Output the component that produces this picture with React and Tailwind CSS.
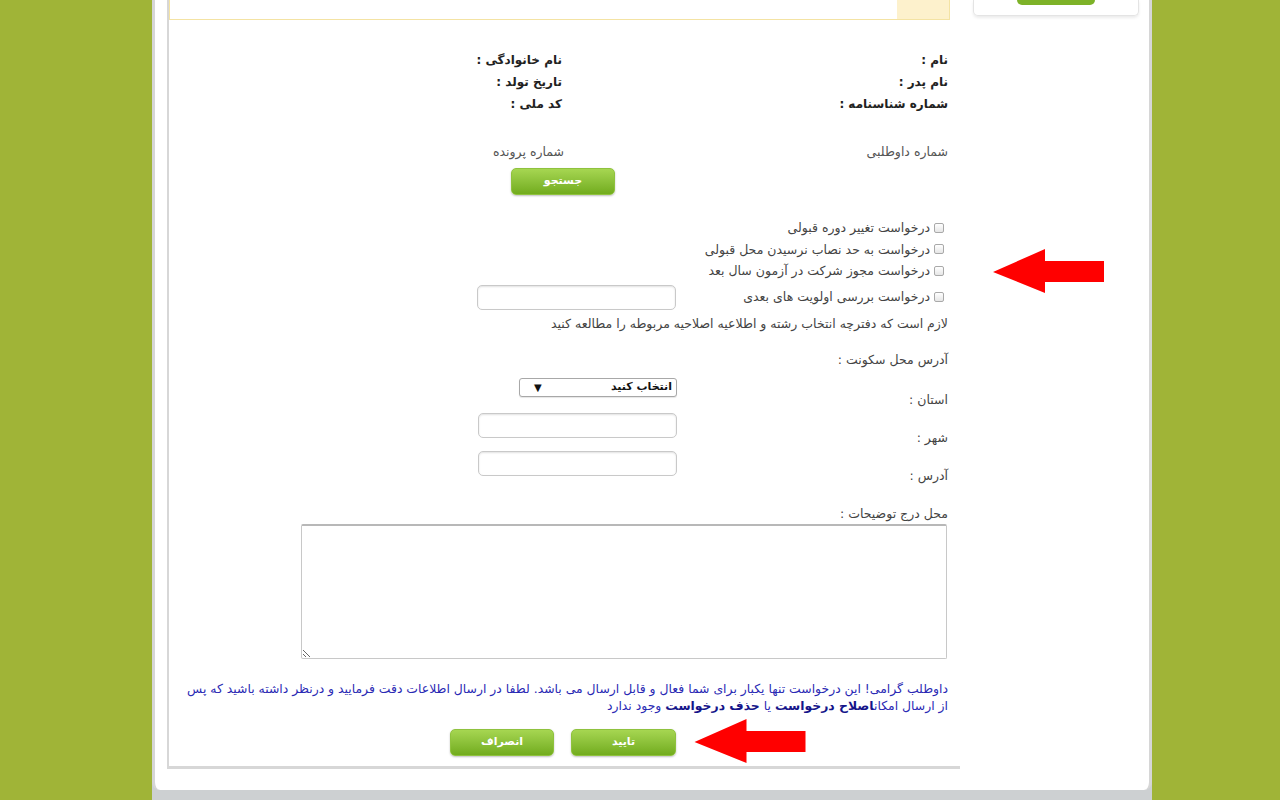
import React from "react";

const font = { fontFamily: '"DejaVu Sans", Tahoma, sans-serif' };

function GreenButton({ children, className = "" }) {
  return (
    <button
      type="button"
      className={`h-[27px] w-[104px] rounded-[5px] border border-[#8fc23e] bg-gradient-to-b from-[#a6d651] to-[#72ac1c] text-[11px] font-bold text-white shadow-[0_1px_2px_rgba(0,0,0,0.25)] ${className}`}
    >
      {children}
    </button>
  );
}

function Box({ className = "" }) {
  return (
    <div
      className={`h-[25px] w-[199px] rounded-[5px] border border-[#c9c9c9] bg-white shadow-[inset_0_1px_2px_rgba(0,0,0,0.12)] ${className}`}
    />
  );
}

function Check({ label }) {
  return (
    <div className="flex items-center gap-[4px] pr-[6px]">
      <span className="h-[10px] w-[10px] rounded-[2px] border border-[#a9a9a9] bg-gradient-to-b from-white to-[#e6e6e6]" />
      <span>{label}</span>
    </div>
  );
}

function Arrow({ className = "" }) {
  return (
    <svg viewBox="0 0 111 45" className={className}>
      <polygon points="0,24 52,1 52,13 111,13 111,34 52,34 52,45" fill="#ff0000" />
    </svg>
  );
}

export default function App() {
  return (
    <div className="relative h-[800px] w-[1280px] overflow-hidden bg-[#a0b437]" style={font}>
      <div className="ml-[152px] h-[800px] w-[1000px] bg-[#cdd0d2]">
        <div
          dir="rtl"
          className="flex h-[790px] rounded-b-[8px] border-x-[3px] border-[#d6d6d6] bg-white text-[12.5px] text-[#333]"
        >
          {/* sidebar */}
          <div className="w-[189px] shrink-0 pr-[10px]">
            <div className="flex h-[16px] w-[166px] justify-center rounded-b-[5px] border border-t-0 border-[#e4e4e4] shadow-[0_2px_3px_rgba(0,0,0,0.08)]">
              <div className="h-[5px] w-[78px] rounded-b-[5px] bg-[#7db228]" />
            </div>
          </div>

          {/* main column */}
          <div className="h-[769px] w-[793px] shrink-0 border-b-[3px] border-l-[2px] border-[#d7d7d7] pr-[10px]">
            <div className="flex h-[20px] border-x border-b border-[#f4e3a3] bg-white">
              <div className="w-[52px] bg-[#fdf1cc]" />
            </div>

            <div className="mt-[29px] grid grid-cols-[386px_1fr] pr-[2px] text-[12px] font-bold leading-[22px] text-[#222]">
              <div>نام :</div>
              <div>نام خانوادگی :</div>
              <div>نام پدر :</div>
              <div>تاریخ تولد :</div>
              <div>شماره شناسنامه :</div>
              <div>کد ملی :</div>
            </div>

            <div className="mt-[28px] grid grid-cols-[384px_1fr] pr-[2px] leading-[18px] text-[#555]">
              <div>شماره داوطلبی</div>
              <div>شماره پرونده</div>
            </div>
            <div className="mt-[7px] flex">
              <GreenButton className="mr-[335px]">جستجو</GreenButton>
            </div>

            <div className="mt-[22px] flex flex-col leading-[21.5px] text-[#444]">
              <Check label="درخواست تغییر دوره قبولی" />
              <Check label="درخواست به حد نصاب نرسیدن محل قبولی" />
              <Check label="درخواست مجوز شرکت در آزمون سال بعد" />
              <div className="flex items-center pt-[3px]">
                <Check label="درخواست بررسی اولویت های بعدی" />
                <Box className="me-[308px] ms-auto" />
              </div>
            </div>
            <div className="mt-[5px] pr-[2px] leading-[18px] text-[#444]">
              لازم است که دفترچه انتخاب رشته و اطلاعیه اصلاحیه مربوطه را مطالعه کنید
            </div>

            <div className="mt-[18px] pr-[2px] leading-[18px] text-[#444]">آدرس محل سکونت :</div>
            <div className="mt-[9px] flex text-[#444]">
              <div className="flex flex-col pr-[2px] pt-[3px] leading-[38px]">
                <div>استان :</div>
                <div>شهر :</div>
                <div>آدرس :</div>
              </div>
              <div className="me-[308px] ms-auto flex w-[200px] flex-col items-start">
                <div className="flex h-[19px] w-[158px] items-center justify-between rounded-[3px] border border-[#a8a8a8] bg-white px-[4px] text-[11px] font-bold text-[#111] shadow-[0_1px_1px_rgba(0,0,0,0.1)]">
                  <span>انتخاب کنید</span>
                  <span className="ml-[10px] text-[10px]">▼</span>
                </div>
                <Box className="mt-[16px]" />
                <Box className="mt-[13px]" />
              </div>
            </div>

            <div className="mt-[10px] pr-[2px] leading-[18px] text-[#444]">محل درج توضیحات :</div>
            <textarea
              className="mr-[3px] mt-[1px] block h-[135px] w-[646px] resize rounded-[2px] border border-t-2 border-[#c8c8c8] border-t-[#b8b8b8] bg-white outline-none"
              readOnly
            />

            <div className="mt-[21px] whitespace-nowrap pr-[2px] text-[12.4px] leading-[17px] text-[#2a2ab4]">
              داوطلب گرامی! این درخواست تنها یکبار برای شما فعال و قابل ارسال می باشد. لطفا در ارسال اطلاعات دقت فرمایید و درنظر داشته باشید که پس
              <br />
              از ارسال امکان<b className="text-[#15158a]">اصلاح درخواست</b> یا <b className="text-[#15158a]">حذف درخواست</b> وجود ندارد
            </div>

            <div className="mr-[274px] mt-[15px] flex gap-[17px]">
              <GreenButton className="w-[105px]">تایید</GreenButton>
              <GreenButton>انصراف</GreenButton>
            </div>
          </div>
        </div>
      </div>

      <Arrow className="absolute left-[993px] top-[248px] h-[45px] w-[111px]" />
      <Arrow className="absolute left-[692px] top-[718px] h-[45px] w-[116px]" />
    </div>
  );
}
